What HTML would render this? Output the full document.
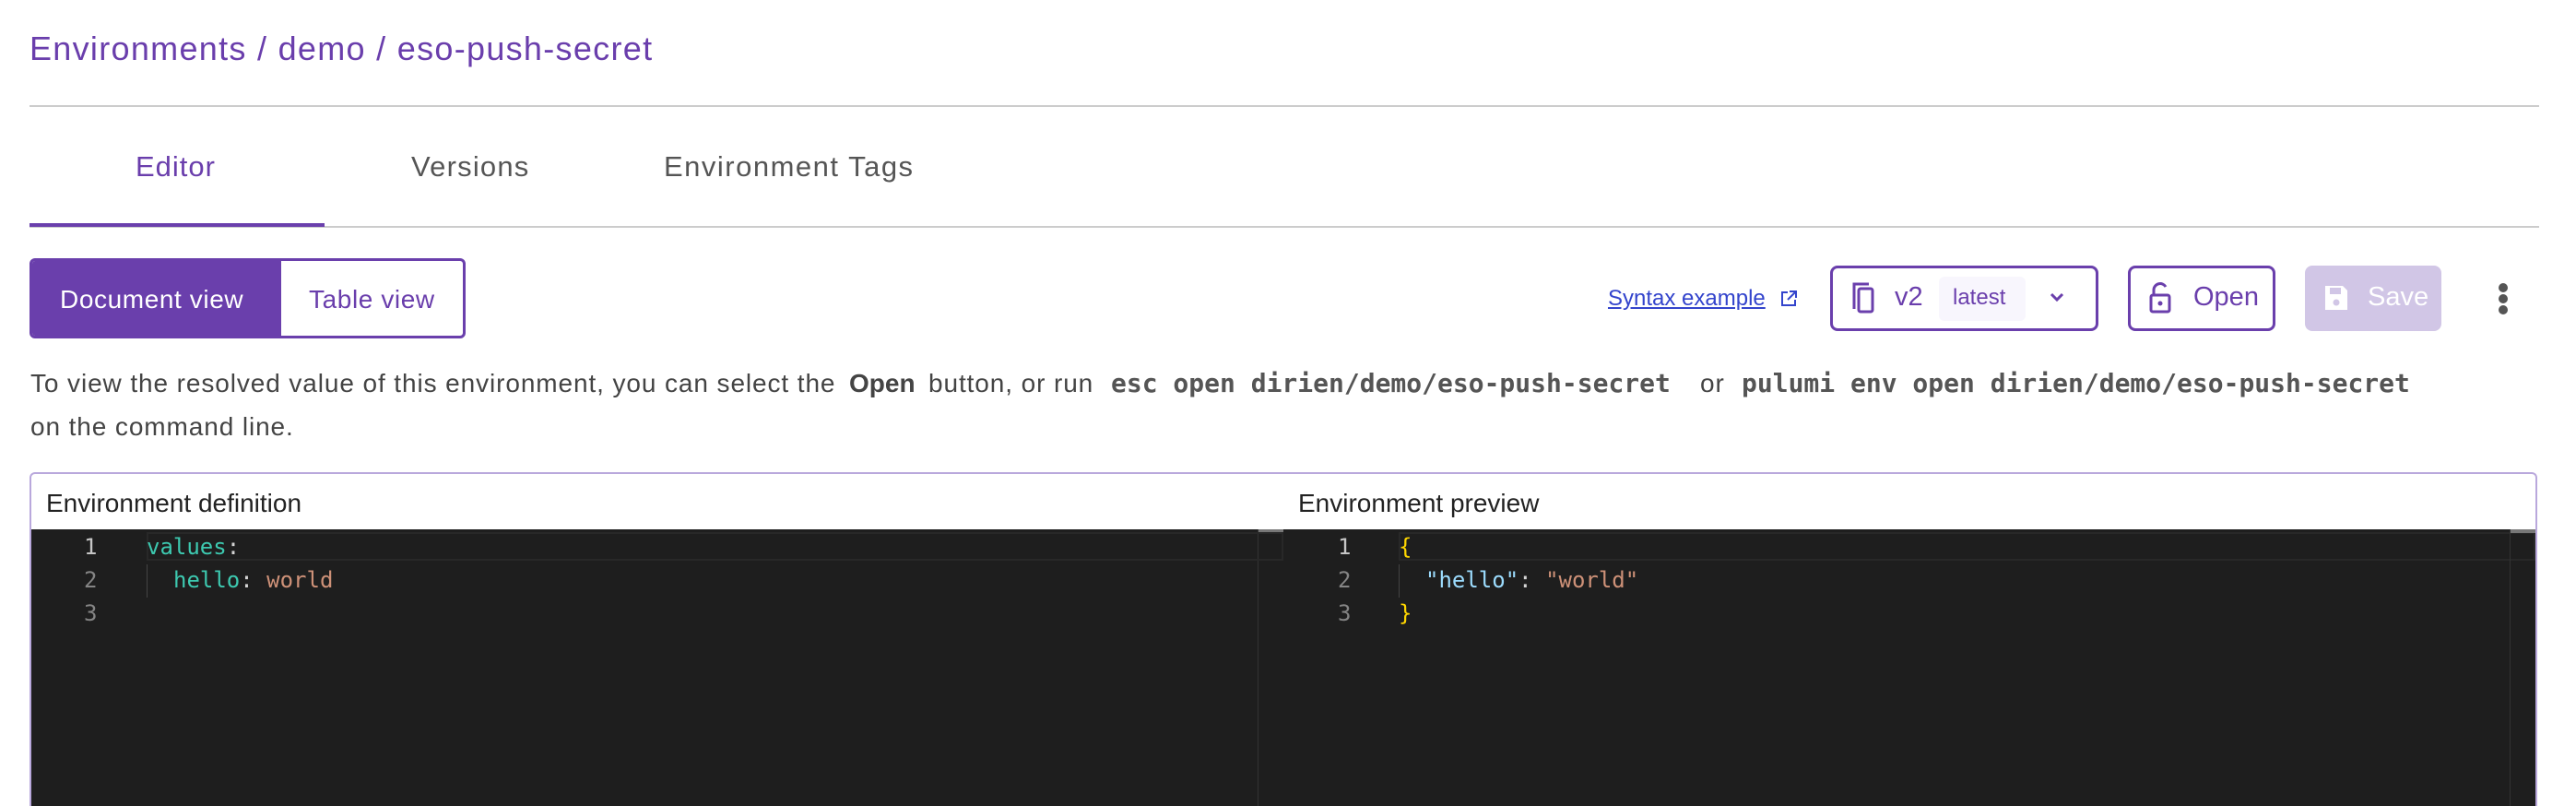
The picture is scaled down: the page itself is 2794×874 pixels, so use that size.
<!DOCTYPE html>
<html style="overflow:hidden"><head><meta charset="utf-8"><style>
*{margin:0;padding:0;box-sizing:border-box}
html,body{width:2794px;height:874px;overflow:hidden}
body{background:#fff;font-family:"Liberation Sans",sans-serif;position:relative}
.a{position:absolute;white-space:nowrap}
.mono{font-family:"DejaVu Sans Mono","Liberation Mono",monospace}
.btn{position:absolute;border:3px solid #6a3fac;border-radius:8px}
.t{letter-spacing:0.9px}
</style></head><body>
<div class="a" style="left:32px;top:32px;font-size:36px;color:#6a3eac;letter-spacing:1.3px">Environments / demo / eso-push-secret</div>
<div class="a" style="left:32px;top:114px;width:2722px;height:2px;background:#ccc"></div>

<div class="a" style="left:147px;top:163px;font-size:31px;color:#6a3eac;letter-spacing:1px">Editor</div>
<div class="a" style="left:446px;top:163px;font-size:31px;color:#555;letter-spacing:1.2px">Versions</div>
<div class="a" style="left:720px;top:163px;font-size:31px;color:#555;letter-spacing:1.5px">Environment Tags</div>
<div class="a" style="left:32px;top:245px;width:2722px;height:2px;background:#ccc"></div>
<div class="a" style="left:32px;top:242px;width:320px;height:4px;background:#6a3fac"></div>

<div class="a" style="left:32px;top:280px;width:473px;height:87px;border:3px solid #6a3fac;border-radius:6px;overflow:hidden">
<div class="a" style="left:0;top:0;width:270px;height:100%;background:#6a3fac"></div>
<div class="a" style="left:30px;top:26px;font-size:28px;color:#fff;letter-spacing:0.6px">Document view</div>
<div class="a" style="left:300px;top:26px;font-size:28px;color:#6a3eac;letter-spacing:0.6px">Table view</div>
</div>

<div class="a" style="left:1744px;top:310px;font-size:24px;color:#3344cc;text-decoration:underline">Syntax example</div>
<svg class="a" style="left:1930px;top:314px" width="20" height="20" viewBox="0 0 20 20"><path d="M9 3H3v14h14v-6M11 2h7v7M18 2l-9 9" fill="none" stroke="#3344cc" stroke-width="2"/></svg>

<div class="btn" style="left:1985px;top:288px;width:291px;height:71px"></div>
<svg class="a" style="left:2008px;top:305px" width="28" height="36" viewBox="0 0 28 36"><path d="M3 30V3h16" fill="none" stroke="#6a3fac" stroke-width="3"/><rect x="8" y="8" width="15" height="25" rx="2" fill="none" stroke="#6a3fac" stroke-width="3"/></svg>
<div class="a" style="left:2055px;top:306px;font-size:29px;color:#6a3eac">v2</div>
<div class="a" style="left:2103px;top:300px;width:94px;height:48px;background:#f8f6fd;border-radius:6px"></div>
<div class="a" style="left:2118px;top:309px;font-size:24px;color:#6a3eac">latest</div>
<svg class="a" style="left:2222px;top:316px" width="18" height="12" viewBox="0 0 18 12"><path d="M3 3l6 6 6-6" fill="none" stroke="#6a3fac" stroke-width="3"/></svg>

<div class="btn" style="left:2308px;top:288px;width:160px;height:71px"></div>
<svg class="a" style="left:2330px;top:305px" width="26" height="36" viewBox="0 0 26 36"><path d="M6 15V9a7 7 0 0 1 13-3" fill="none" stroke="#6a3fac" stroke-width="3"/><rect x="3" y="15" width="20" height="18" rx="2" fill="none" stroke="#6a3fac" stroke-width="3"/><circle cx="13" cy="24" r="2.5" fill="#6a3fac"/></svg>
<div class="a" style="left:2379px;top:306px;font-size:29px;color:#6a3eac">Open</div>

<div class="a" style="left:2500px;top:288px;width:148px;height:71px;background:#d1c6e6;border-radius:8px"></div>
<svg class="a" style="left:2520px;top:306px" width="28" height="32" viewBox="0 0 28 32"><path d="M2 4h19l5 5v21H2z" fill="#fff"/><rect x="7" y="6" width="12" height="7" fill="#d1c6e6"/><circle cx="14" cy="22" r="3.5" fill="#d1c6e6"/></svg>
<div class="a" style="left:2568px;top:306px;font-size:29px;color:#fff">Save</div>
<div class="a" style="left:2710px;top:307px;width:10px;height:10px;border-radius:5px;background:#555"></div>
<div class="a" style="left:2710px;top:319px;width:10px;height:10px;border-radius:5px;background:#555"></div>
<div class="a" style="left:2710px;top:331px;width:10px;height:10px;border-radius:5px;background:#555"></div>

<div class="a t" style="left:33px;top:400px;font-size:28px;color:#444">To view the resolved value of this environment, you can select the</div>
<div class="a" style="left:921px;top:400px;font-size:28px;color:#444;font-weight:bold">Open</div>
<div class="a t" style="left:1007px;top:400px;font-size:28px;color:#444">button, or run</div>
<div class="a mono" style="left:1205px;top:399px;font-size:28px;color:#555;font-weight:bold">esc open dirien/demo/eso-push-secret</div>
<div class="a t" style="left:1844px;top:400px;font-size:28px;color:#444">or</div>
<div class="a mono" style="left:1889px;top:399px;font-size:28px;color:#555;font-weight:bold">pulumi env open dirien/demo/eso-push-secret</div>
<div class="a t" style="left:33px;top:447px;font-size:28px;color:#444">on the command line.</div>

<div class="a" style="left:32px;top:512px;width:2720px;height:362px;border:2px solid #b9a8dc;border-bottom:none;border-radius:6px 6px 0 0"></div>
<div class="a" style="left:50px;top:530px;font-size:28px;color:#222">Environment definition</div>
<div class="a" style="left:1408px;top:530px;font-size:28px;color:#222">Environment preview</div>

<div class="a mono" style="left:34px;top:574px;width:1358px;height:300px;background:#1e1e1e;font-size:24px">
<div class="a" style="left:125px;top:3px;width:1231px;height:31px;border:2px solid #282828"></div>
<div class="a" style="left:1330px;top:0;width:1px;height:300px;background:#333"></div>
<div class="a" style="left:1331px;top:0;width:27px;height:4px;background:#777"></div>
<div class="a" style="left:125px;top:38px;width:1px;height:36px;background:#444"></div>
<div class="a" style="left:57px;top:5px;color:#c6c6c6">1</div>
<div class="a" style="left:57px;top:41px;color:#858585">2</div>
<div class="a" style="left:57px;top:77px;color:#858585">3</div>
<div class="a" style="left:125px;top:5px;color:#3dc9b0">values<span style="color:#d4d4d4">:</span></div>
<div class="a" style="left:154px;top:41px;color:#3dc9b0">hello<span style="color:#d4d4d4">:</span> <span style="color:#ce9178">world</span></div>
</div>

<div class="a mono" style="left:1364px;top:574px;width:1386px;height:300px;background:#1e1e1e;font-size:24px">
<div class="a" style="left:0;top:0;width:1px;height:300px;background:#333"></div>
<div class="a" style="left:1px;top:0;width:27px;height:4px;background:#777"></div>
<div class="a" style="left:0;top:3px;width:28px;height:31px;border:2px solid #282828;border-left:none"></div>
<div class="a" style="left:153px;top:3px;width:1233px;height:31px;border:2px solid #282828"></div>
<div class="a" style="left:1358px;top:0;width:1px;height:300px;background:#333"></div>
<div class="a" style="left:1359px;top:0;width:27px;height:4px;background:#777"></div>
<div class="a" style="left:153px;top:38px;width:1px;height:36px;background:#444"></div>
<div class="a" style="left:87px;top:5px;color:#c6c6c6">1</div>
<div class="a" style="left:87px;top:41px;color:#858585">2</div>
<div class="a" style="left:87px;top:77px;color:#858585">3</div>
<div class="a" style="left:153px;top:5px;color:#ffd700">{</div>
<div class="a" style="left:182px;top:41px;color:#9cdcfe">"hello"<span style="color:#d4d4d4">:</span> <span style="color:#ce9178">"world"</span></div>
<div class="a" style="left:153px;top:77px;color:#ffd700">}</div>
</div>
</body></html>
